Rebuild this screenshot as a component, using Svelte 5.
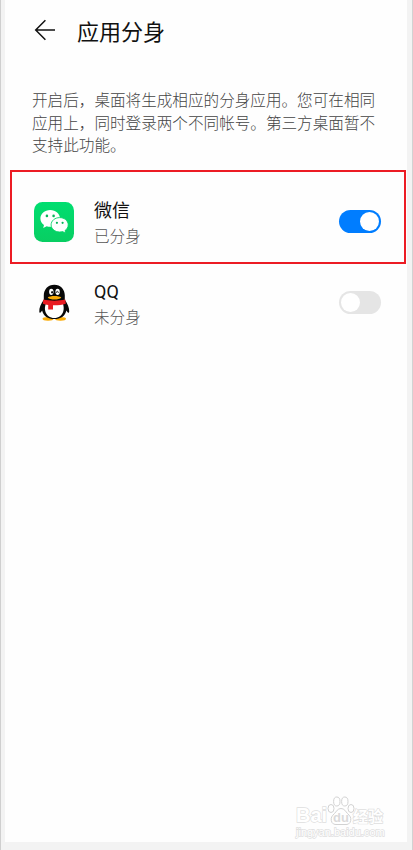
<script lang="ts">
  let apps = $state([
    { id: "wechat", name: "微信", on: true },
    { id: "qq", name: "QQ", on: false },
  ]);
</script>

<div class="frame">
  <main class="screen">
    <header>
      <svg class="back" viewBox="0 0 22 22" width="22" height="22">
        <path d="M21 11H2M11.400 1.300L1.700 11l9.700 9.700" />
      </svg>
      <h1>应用分身</h1>
    </header>

    <p class="intro">
      <span>开启后，桌面将生成相应的分身应用。您可在相同</span>
      <span>应用上，同时登录两个不同帐号。第三方桌面暂不</span>
      <span>支持此功能。</span>
    </p>

    {#each apps as app}
      <section class="row" class:marked={app.id === "wechat"}>
        <div class="icon">
          {#if app.id === "wechat"}
            <svg viewBox="0 0 40 40" width="40" height="40">
              <defs>
                <linearGradient id="green" x1="0" y1="0" x2="0" y2="1">
                  <stop offset="0" stop-color="#00de70" />
                  <stop offset="1" stop-color="#08ce62" />
                </linearGradient>
              </defs>
              <rect width="40" height="40" rx="8.5" fill="url(#green)" />
              <path d="M16.2 8C10.7 8 6.4 11.8 6.4 16.4c0 2.8 1.4 5 3.6 6.6l-.8 3 3.500-1.800c1.100.4 2.300.6 3.500.6 5.500 0 9.800-3.800 9.800-8.400S21.700 8 16.200 8z" fill="#fff" />
              <circle cx="12.900" cy="13.900" r="1.300" fill="#07b65a" />
              <circle cx="19.600" cy="13.900" r="1.300" fill="#07b65a" />
              <path d="M25.700 15.600c-4.800 0-8.600 3.200-8.600 7.200s3.800 7.200 8.600 7.200c1 0 2-.1 2.900-.4l3.100 1.600-.7-2.600c2-1.400 3.200-3.400 3.200-5.800 0-4-3.800-7.200-8.500-7.200z" fill="#fff" stroke="#05d568" stroke-width="0.900" />
              <circle cx="22.900" cy="20.800" r="1.100" fill="#07b65a" />
              <circle cx="28.600" cy="20.800" r="1.100" fill="#07b65a" />
            </svg>
          {:else}
            <svg viewBox="0 0 40 40" width="40" height="40">
              <ellipse cx="14" cy="35.800" rx="5.500" ry="1.900" fill="#faab07" />
              <ellipse cx="26.500" cy="35.800" rx="5.500" ry="1.900" fill="#faab07" />
              <path d="M20.300 1.700c-6.300 0-10.500 4.700-10.500 10.500v4.500C7 20.500 5 25 5.300 28.600c.1 2 1.200 1.300 2.800-1.200C9.500 33 13.800 36 20.300 36S31.200 33 32.300 27.400c1.600 2.500 2.700 3.200 2.900 1.200.2-3.600-1.600-8.100-4.400-11.900v-4.500c0-5.800-4.200-10.500-10.500-10.500z" fill="#080808" />
              <path d="M12 20h16.800c.9 3 1.300 5.800.5 8.300-1.100 4.200-4.700 6.800-9 6.800s-7.900-2.600-9-6.800c-.8-2.500-.3-5.300.7-8.300z" fill="#fff" />
              <ellipse cx="17.300" cy="8.800" rx="2.200" ry="3.100" fill="#fff" />
              <ellipse cx="23.600" cy="8.800" rx="2.200" ry="3.100" fill="#fff" />
              <ellipse cx="18.100" cy="9.200" rx="0.900" ry="1.300" fill="#080808" />
              <path d="M22.300 10c0-2.300 2-2.300 2 0" fill="none" stroke="#080808" stroke-width="0.900" />
              <path d="M13.700 14.500c2.400-2 11.200-2 13.600 0-2.100 2.700-11.500 2.700-13.600 0z" fill="#faab07" />
              <path d="M9.300 16.500c6.500 1.500 15.500 1.500 22 0l.5 4.200c-4 1.100-8 1.600-12.800 1.500v4.400h-4.800v-4.600c-2-.2-3.800-.6-5.300-1.200z" fill="#e91b22" />
            </svg>
          {/if}
        </div>
        <div class="label">
          <span class="name">{app.name}</span>
          <span class="state">{app.on ? "已分身" : "未分身"}</span>
        </div>
        <button
          class="toggle"
          class:on={app.on}
          aria-label={app.name}
          onclick={() => (app.on = !app.on)}
        >
          <span class="knob"></span>
        </button>
      </section>
    {/each}

    <div class="watermark">
      <div class="brand">
        <span class="latin">Bai</span>
        <svg viewBox="0 0 28 30" width="28" height="30">
          <ellipse cx="4" cy="12.500" rx="3" ry="4" />
          <ellipse cx="9.800" cy="5.500" rx="3.200" ry="4.500" />
          <ellipse cx="17.800" cy="5.500" rx="3.200" ry="4.500" />
          <ellipse cx="24" cy="12.500" rx="3" ry="4" />
          <path d="M14 12.500c-3.500 0-4.500 3-6.500 5-2.500 2.400-3.700 4-3.200 7 .5 3.300 3 4.300 5.700 4h8c2.700.3 5.200-.7 5.700-4 .5-3-.7-4.600-3.200-7-2-2-3-5-6.500-5z" />
          <text x="14" y="26" text-anchor="middle">du</text>
        </svg>
        <span class="han">经验</span>
      </div>
      <div class="url">jingyan.baidu.com</div>
    </div>
  </main>
</div>

<style>
  :global(body) {
    background: #f3f3f3;
  }

  .frame {
    border-left: 1px solid #cfcfcf;
    border-right: 1px solid #d2d2d2;
    box-sizing: border-box;
    font-family: "Noto Sans CJK SC", sans-serif;
    height: 850px;
    padding: 0 5px 8px 4px;
  }

  .screen {
    background: #fefefe;
    display: flex;
    flex-direction: column;
    height: 842px;
  }

  header {
    align-items: center;
    display: flex;
    gap: 21px;
    height: 60px;
    padding-left: 29px;
  }

  .back {
    fill: none;
    stroke: #111;
    stroke-width: 1.5;
  }

  h1 {
    color: #111;
    font-size: 22px;
    font-weight: 400;
    line-height: 30px;
    margin: 0;
  }

  .intro {
    color: #444;
    font-size: 15.6px;
    font-weight: 300;
    line-height: 22.7px;
    margin: 28px 0 14px 27px;
  }

  .intro span {
    display: block;
    white-space: nowrap;
  }

  .row {
    align-items: center;
    border: 2px solid transparent;
    box-sizing: border-box;
    display: flex;
    height: 68px;
    margin: 5px 1px 0 5px;
    padding: 0 23px 0 22px;
  }

  .row.marked {
    border-color: #ec1c24;
    height: 94px;
    margin-top: 0;
    padding-top: 10px;
  }

  .icon {
    height: 40px;
    width: 60px;
  }

  .label {
    display: flex;
    flex: 1;
    flex-direction: column;
  }

  .name {
    color: #111;
    font-family: Roboto, "Noto Sans CJK SC", sans-serif;
    font-size: 18px;
    line-height: 24px;
    padding-top: 2px;
  }

  .state {
    color: #555;
    font-size: 15.6px;
    font-weight: 300;
    line-height: 24px;
  }

  .toggle {
    background: #e5e5e5;
    border: 0;
    border-radius: 12px;
    display: flex;
    height: 23px;
    margin-bottom: 1px;
    padding: 2px;
    width: 42px;
  }

  .toggle.on {
    background: #007dff;
    justify-content: flex-end;
  }

  .knob {
    background: #fff;
    border-radius: 50%;
    height: 19px;
    width: 19px;
  }

  .watermark {
    color: #fff;
    margin: auto 20px 3px auto;
    paint-order: stroke fill;
    -webkit-text-stroke: 1.4px #dfdfdf;
    width: 91px;
  }

  .brand {
    align-items: flex-end;
    display: flex;
    height: 30px;
  }

  .latin {
    font: bold 20px/22px "Liberation Sans", sans-serif;
    width: 31px;
  }

  .brand svg {
    fill: #fff;
    flex: none;
    paint-order: normal;
    stroke: #d2d2d2;
    stroke-width: 1;
  }

  .brand text {
    fill: #dadada;
    font: bold 13px "Liberation Sans", sans-serif;
    stroke: none;
    -webkit-text-stroke: 0;
  }

  .han {
    font-size: 15px;
    font-weight: 700;
    line-height: 20px;
    margin-left: -2px;
  }

  .url {
    font: 11px/13px "Liberation Sans", sans-serif;
    white-space: nowrap;
  }
</style>
